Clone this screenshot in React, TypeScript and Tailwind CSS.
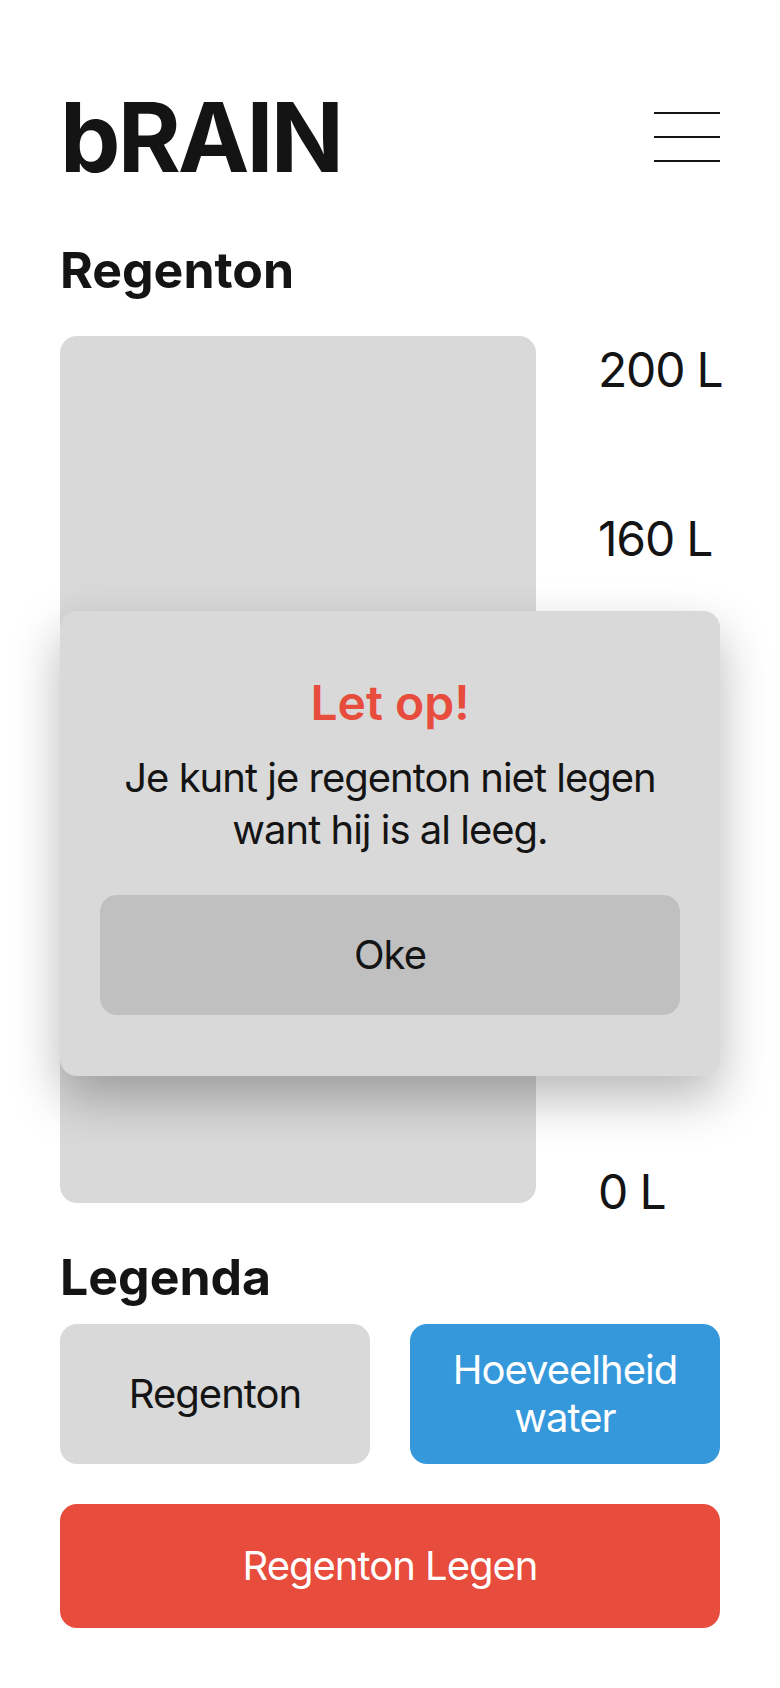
import * as React from "react";

const levels = ["200 L", "160 L", "120 L", "80 L", "40 L"];

function Hamburger() {
  return (
    <button aria-label="Menu" className="flex w-[66px] flex-col gap-[22px]">
      <span className="block h-[2px] w-full bg-[#141414]" />
      <span className="block h-[2px] w-full bg-[#141414]" />
      <span className="block h-[2px] w-full bg-[#141414]" />
    </button>
  );
}

/** Warning shown when the barrel is already empty. */
function EmptyAlert({ onClose }: { onClose: () => void }) {
  return (
    <div className="absolute left-0 right-0 top-[275px] z-10 rounded-[17px] bg-[#d9d9d9] px-[40px] pb-[61px] pt-[68px] text-center shadow-[0_22px_50px_rgba(0,0,0,0.28)]">
      <h2 className="text-[48px] font-semibold leading-none text-[#e74c3c]">Let op!</h2>
      <p className="mt-[25px] text-[40px] leading-[52px] tracking-tight text-[#141414]">
        Je kunt je regenton niet legen want hij is al leeg.
      </p>
      <button
        onClick={onClose}
        className="mt-[39px] flex h-[120px] w-full items-center justify-center rounded-[17px] bg-[#c0c0c0] text-[40px] tracking-tight text-[#141414]"
      >
        Oke
      </button>
    </div>
  );
}

export default function App() {
  const [alertOpen, setAlertOpen] = React.useState(true);

  return (
    <div className="min-h-screen bg-white px-[60px] pt-[89px] font-['Inter',sans-serif] text-[#141414]">
      <header className="flex items-center justify-between">
        <h1 className="text-[96px] font-bold leading-none tracking-[-0.03em]">bRAIN</h1>
        <Hamburger />
      </header>

      <h2 className="mt-[60px] text-[50px] font-bold leading-none">Regenton</h2>

      <div className="relative mt-[41px] flex items-start">
        <div className="h-[867px] w-[476px] shrink-0 rounded-[17px] bg-[#d9d9d9]" />
        <div className="ml-[62px] flex h-[880px] shrink-0 flex-col justify-between whitespace-nowrap pt-[10px] text-[48px] leading-[48px] tracking-tight">
          <div className="flex flex-col gap-[121px]">
            {levels.map((l) => (
              <span key={l}>{l}</span>
            ))}
          </div>
          <span>0 L</span>
        </div>
        {alertOpen && <EmptyAlert onClose={() => setAlertOpen(false)} />}
      </div>

      <h2 className="mt-[36px] text-[50px] font-bold leading-none">Legenda</h2>

      <div className="mt-[22px] grid grid-cols-2 gap-[40px]">
        <div className="flex h-[140px] items-center justify-center rounded-[17px] bg-[#d9d9d9] px-6 text-center text-[40px] leading-[48px] tracking-tight">
          Regenton
        </div>
        <div className="flex h-[140px] items-center justify-center rounded-[17px] bg-[#3498db] px-6 text-center text-[40px] leading-[48px] tracking-tight text-white">
          Hoeveelheid water
        </div>
      </div>

      <button
        onClick={() => setAlertOpen(true)}
        className="mt-[40px] flex h-[124px] w-full items-center justify-center rounded-[17px] bg-[#e74c3c] text-[40px] tracking-tight text-white"
      >
        Regenton Legen
      </button>
    </div>
  );
}
